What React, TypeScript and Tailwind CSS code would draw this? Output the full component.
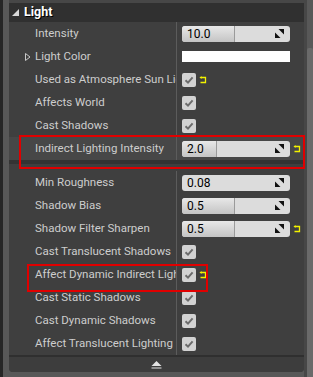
import React from "react";

type Row =
  | { label: string; kind: "num"; value: string; fill?: number; reset?: boolean }
  | { label: string; kind: "check"; reset?: boolean }
  | { label: string; kind: "color" };

const TOP: Row[] = [
  { label: "Intensity", kind: "num", value: "10.0", fill: 53 },
  { label: "Light Color", kind: "color" },
  { label: "Used as Atmosphere Sun Light", kind: "check", reset: true },
  { label: "Affects World", kind: "check" },
  { label: "Cast Shadows", kind: "check" },
];

const BOTTOM: Row[] = [
  { label: "Min Roughness", kind: "num", value: "0.08" },
  { label: "Shadow Bias", kind: "num", value: "0.5", fill: 53 },
  { label: "Shadow Filter Sharpen", kind: "num", value: "0.5", fill: 53, reset: true },
  { label: "Cast Translucent Shadows", kind: "check" },
  { label: "Affect Dynamic Indirect Lighting", kind: "check", reset: true },
  { label: "Cast Static Shadows", kind: "check" },
  { label: "Cast Dynamic Shadows", kind: "check" },
  { label: "Affect Translucent Lighting", kind: "check" },
];

function ResetIcon() {
  return (
    <svg width="8" height="8" viewBox="0 0 8 8" className="shrink-0">
      <path d="M2 1.5H6.5V6.5H1.5" fill="none" stroke="#f2f200" strokeWidth="1.3" />
      <path d="M0.5 1.5L2.5 0V3Z" fill="#f2f200" />
    </svg>
  );
}

function SpinIcon() {
  return (
    <svg width="9" height="9" viewBox="0 0 9 9">
      <path d="M3.5 0H9V5.5Z" fill="#111" />
      <path d="M0 3.5V9H5.5Z" fill="#111" />
    </svg>
  );
}

function NumBox({ value, fill }: { value: string; fill?: number }) {
  return (
    <div className="relative flex h-[16px] w-[108px] items-center rounded-[3px] bg-[#dcdcdc]">
      {fill ? (
        <div
          className="absolute inset-y-0 left-0 rounded-l-[3px] border-r border-[#9a9a9a] bg-gradient-to-b from-[#e8e8e8] to-[#c4c4c4]"
          style={{ width: fill }}
        />
      ) : null}
      <span className="relative pl-[5px] text-[12px] leading-none text-black">{value}</span>
      <span className="relative ml-auto mr-[6px] flex">
        <SpinIcon />
      </span>
    </div>
  );
}

function Check() {
  return (
    <div className="flex h-[14px] w-[14px] items-center justify-center rounded-[2px] bg-[#d2d2d2]">
      <svg width="10" height="10" viewBox="0 0 10 10">
        <path d="M1.5 5.2L4 7.6L8.6 2.4" fill="none" stroke="#6b6b6b" strokeWidth="2" />
      </svg>
    </div>
  );
}

function PropRow({ row, highlight }: { row: Row; highlight?: boolean }) {
  return (
    <div className={`flex h-[23px] ${highlight ? "bg-[#474747]" : ""}`}>
      <div className="relative flex w-[168px] shrink-0 items-center overflow-hidden border-r border-[#5c5c5c] pl-[26px]">
        {row.kind === "color" && (
          <svg width="6" height="8" viewBox="0 0 6 8" className="absolute left-[16px] top-[8px]">
            <path d="M0.5 0.5L5 4L0.5 7.5Z" fill="none" stroke="#c8c8c8" strokeWidth="1" />
          </svg>
        )}
        <span className="whitespace-nowrap text-[11.5px] text-[#cdcdcd]">{row.label}</span>
      </div>
      <div className="flex items-center gap-[3px] pl-[5px]">
        {row.kind === "num" && <NumBox value={row.value} fill={row.fill} />}
        {row.kind === "color" && <div className="h-[11px] w-[108px] bg-white" />}
        {row.kind === "check" && <Check />}
        {"reset" in row && row.reset && <ResetIcon />}
      </div>
    </div>
  );
}

export default function App() {
  return (
    <div
      className="relative flex h-[377px] w-[313px] overflow-hidden bg-[#585858]"
      style={{ fontFamily: "Roboto, 'Noto Sans', sans-serif" }}
    >
      <div className="w-[3px] shrink-0 bg-[#262626]" />
      <div className="w-[6px] shrink-0" />
      <div className="flex h-[372px] w-[295px] shrink-0 flex-col overflow-hidden rounded-b-[4px] bg-[#3f3f3f]">
        <div className="h-[3px] bg-[#474747]" />
        <div className="flex h-[19px] items-center gap-[5px] bg-[#303030] pl-[3px]">
          <svg width="7" height="7" viewBox="0 0 7 7">
            <path d="M7 0V7H0Z" fill="#d8d8d8" />
          </svg>
          <span className="text-[12.5px] font-bold text-white [text-shadow:1px_1px_0_#000]">Light</span>
        </div>
        {TOP.map((r) => (
          <PropRow key={r.label} row={r} />
        ))}
        <PropRow row={{ label: "Indirect Lighting Intensity", kind: "num", value: "2.0", fill: 35, reset: true }} highlight />
        <div className="h-[4px] bg-[#333333]" />
        <div className="h-[7px]" />
        {BOTTOM.map((r) => (
          <PropRow key={r.label} row={r} />
        ))}
        <div className="h-[2px] bg-[#2f2f2f]" />
        <div className="flex flex-1 items-center justify-center bg-[#3d3d3d]">
          <svg width="11" height="8" viewBox="0 0 11 8">
            <path d="M5.5 0L10.5 5H0.5Z" fill="#e4e4e4" />
            <path d="M0.5 7H10.5" stroke="#e4e4e4" strokeWidth="1.2" />
          </svg>
        </div>
      </div>
      <div className="flex flex-1">
        <div className="w-[3px] bg-[#474747]" />
        <div className="flex-1 pt-[48px]">
          <div className="h-full rounded-t-[2px] bg-[#6a6a6a]" />
        </div>
      </div>

      <div className="pointer-events-none absolute left-[19px] top-[135px] h-[34px] w-[286px] border-2 border-[#e00000]" />
      <div className="pointer-events-none absolute left-[27px] top-[264px] h-[28px] w-[181px] border-2 border-[#e00000]" />
    </div>
  );
}
